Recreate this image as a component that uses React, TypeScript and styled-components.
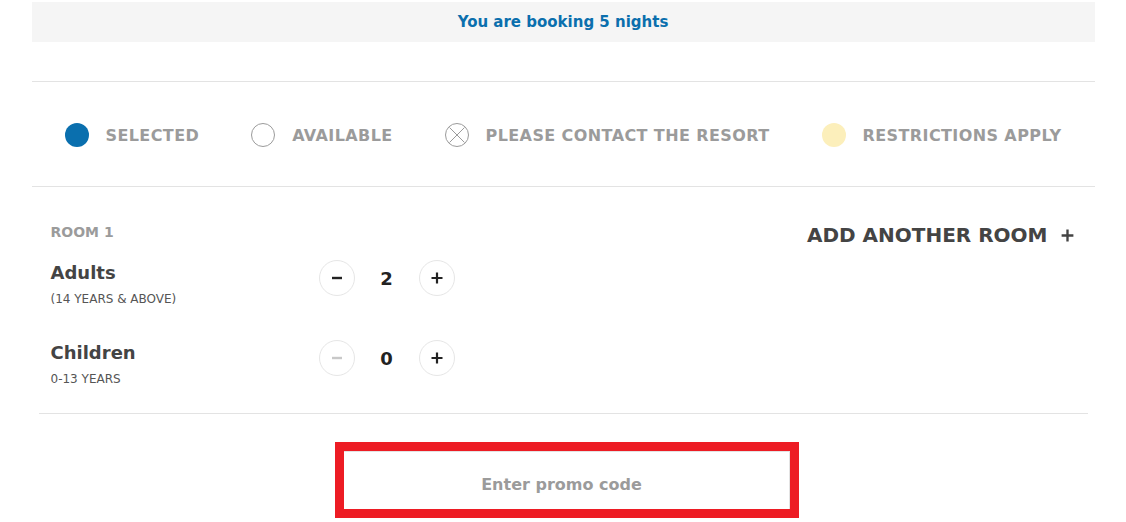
import React, { useState } from "react";
import styled, { createGlobalStyle } from "styled-components";

type LegendKind = "selected" | "available" | "contact" | "restricted";

const legend: { kind: LegendKind; label: string }[] = [
  { kind: "selected", label: "SELECTED" },
  { kind: "available", label: "AVAILABLE" },
  { kind: "contact", label: "PLEASE CONTACT THE RESORT" },
  { kind: "restricted", label: "RESTRICTIONS APPLY" },
];

const GlobalStyle = createGlobalStyle`
  body {
    margin: 0;
    background: #fff;
    font-family: "DejaVu Sans", Verdana, sans-serif;
  }
`;

const Page = styled.div`
  max-width: 1063px;
  margin: 0 auto;
  padding-top: 2px;
  display: flex;
  flex-direction: column;
`;

const Banner = styled.div`
  height: 40px;
  background: #f5f5f5;
  color: #0b6fad;
  font-size: 15px;
  font-weight: bold;
  display: flex;
  align-items: center;
  justify-content: center;
`;

const Legend = styled.ul`
  list-style: none;
  margin: 39px 0 0;
  padding: 2px 33px 0;
  height: 106px;
  box-sizing: border-box;
  border-top: 1px solid #e3e3e3;
  border-bottom: 1px solid #e3e3e3;
  display: flex;
  align-items: center;
  justify-content: space-between;
`;

const LegendItem = styled.li`
  display: flex;
  align-items: center;
  gap: 17px;
  color: #9b9b9b;
  font-size: 16px;
  font-weight: bold;
  letter-spacing: 0.4px;
`;

const Dot = styled.span<{ $kind: LegendKind }>`
  position: relative;
  width: 24px;
  height: 24px;
  border-radius: 50%;
  box-sizing: border-box;
  display: inline-flex;
  background: ${(p) =>
    p.$kind === "selected" ? "#0a6fae" : p.$kind === "restricted" ? "#fcefbb" : "#fff"};
  border: ${(p) =>
    p.$kind === "available" || p.$kind === "contact" ? "1px solid #9b9b9b" : "none"};
`;

const RoomSection = styled.section`
  display: flex;
  justify-content: space-between;
  align-items: flex-start;
  margin: 0 7px;
  padding: 37px 13px 26px 12px;
  border-bottom: 1px solid #e3e3e3;
`;

const RoomColumn = styled.div`
  display: flex;
  flex-direction: column;
  gap: 33px;
`;

const RoomTitle = styled.div`
  color: #9b9b9b;
  font-size: 14px;
  font-weight: bold;
  line-height: 17px;
  margin-bottom: -14px;
`;

const GuestRow = styled.div`
  display: flex;
  align-items: flex-start;
`;

const GuestLabel = styled.div`
  width: 268px;
  padding-top: 2px;
  display: flex;
  flex-direction: column;
  gap: 8px;
`;

const GuestName = styled.span`
  color: #444;
  font-size: 18px;
  font-weight: bold;
  line-height: 22px;
`;

const GuestHint = styled.span`
  color: #555;
  font-size: 12px;
  line-height: 15px;
`;

const Counter = styled.div`
  display: flex;
  align-items: center;
`;

const RoundButton = styled.button<{ $disabled?: boolean }>`
  width: 36px;
  height: 36px;
  border-radius: 50%;
  border: 1px solid #e6e6e6;
  background: #fff;
  padding: 0;
  display: flex;
  align-items: center;
  justify-content: center;
  color: ${(p) => (p.$disabled ? "#c8c8c8" : "#222")};
  cursor: ${(p) => (p.$disabled ? "default" : "pointer")};
`;

const Count = styled.span`
  width: 64px;
  text-align: center;
  color: #222;
  font-size: 18px;
  font-weight: bold;
`;

const AddRoom = styled.button`
  margin-top: -1px;
  border: none;
  background: none;
  padding: 0;
  display: flex;
  align-items: center;
  gap: 12px;
  color: #444;
  font-family: inherit;
  font-size: 20px;
  font-weight: bold;
  line-height: 24px;
  cursor: pointer;
`;

const PromoFrame = styled.div`
  align-self: center;
  margin: 28px 0 0 8px;
  width: 446px;
  border: 9px solid #ed1c24;
`;

const PromoInput = styled.input`
  display: block;
  width: 100%;
  height: 58px;
  box-sizing: border-box;
  padding: 8px 10px 0 0;
  border: 1px solid #e3e3e3;
  border-left: none;
  border-bottom: none;
  outline: none;
  text-align: center;
  font-family: inherit;
  font-size: 16px;
  font-weight: bold;
  color: #444;

  &::placeholder {
    color: #9b9b9b;
  }
`;

const Minus = () => (
  <svg width="14" height="14" viewBox="0 0 14 14">
    <path d="M2 7h10" stroke="currentColor" strokeWidth="2.4" />
  </svg>
);

const Plus = ({ size = 14 }: { size?: number }) => (
  <svg width={size} height={size} viewBox="0 0 14 14">
    <path d="M1.5 7h11M7 1.5v11" stroke="currentColor" strokeWidth="2.2" />
  </svg>
);

const ContactMark = () => (
  <svg width="24" height="24" viewBox="0 0 24 24" style={{ position: "absolute", left: -1, top: -1 }}>
    <path d="M4.5 4.5l15 15M19.5 4.5l-15 15" stroke="#9b9b9b" strokeWidth="1" />
  </svg>
);

const App: React.FC = () => {
  const [adults, setAdults] = useState(2);
  const [children, setChildren] = useState(0);
  const [promo, setPromo] = useState("");

  return (
    <>
      <GlobalStyle />
      <Page>
        <Banner>You are booking 5 nights</Banner>

        <Legend>
          {legend.map((item) => (
            <LegendItem key={item.kind}>
              <Dot $kind={item.kind}>{item.kind === "contact" && <ContactMark />}</Dot>
              {item.label}
            </LegendItem>
          ))}
        </Legend>

        <RoomSection>
          <RoomColumn>
            <RoomTitle>ROOM 1</RoomTitle>
            <GuestRow>
              <GuestLabel>
                <GuestName>Adults</GuestName>
                <GuestHint>(14 YEARS &amp; ABOVE)</GuestHint>
              </GuestLabel>
              <Counter>
                <RoundButton onClick={() => setAdults((n) => Math.max(1, n - 1))}>
                  <Minus />
                </RoundButton>
                <Count>{adults}</Count>
                <RoundButton onClick={() => setAdults((n) => n + 1)}>
                  <Plus />
                </RoundButton>
              </Counter>
            </GuestRow>
            <GuestRow>
              <GuestLabel>
                <GuestName>Children</GuestName>
                <GuestHint>0-13 YEARS</GuestHint>
              </GuestLabel>
              <Counter>
                <RoundButton
                  $disabled={children === 0}
                  onClick={() => setChildren((n) => Math.max(0, n - 1))}
                >
                  <Minus />
                </RoundButton>
                <Count>{children}</Count>
                <RoundButton onClick={() => setChildren((n) => n + 1)}>
                  <Plus />
                </RoundButton>
              </Counter>
            </GuestRow>
          </RoomColumn>
          <AddRoom>
            ADD ANOTHER ROOM
            <Plus size={15} />
          </AddRoom>
        </RoomSection>

        <PromoFrame>
          <PromoInput
            placeholder="Enter promo code"
            value={promo}
            onChange={(e) => setPromo(e.target.value)}
          />
        </PromoFrame>
      </Page>
    </>
  );
};

export default App;
